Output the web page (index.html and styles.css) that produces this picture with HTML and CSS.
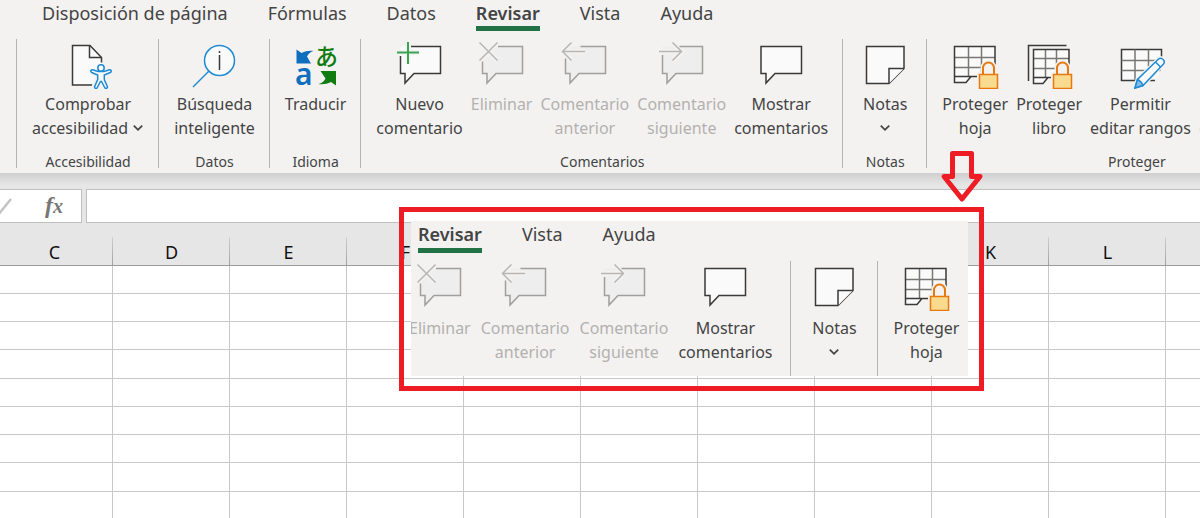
FILE: index.html
```html
<!DOCTYPE html>
<html lang="es">
<head>
    <meta charset="UTF-8">
    <meta name="viewport" content="width=device-width, initial-scale=1.0">
    <title>Proteger hoja</title>
    <link rel="stylesheet" href="styles.css">
</head>
<body>
    <!-- Shared icons -->
    <svg class="sprite" aria-hidden="true">
        <symbol id="delete-comment" viewBox="0 0 48 48">
            <path class="pale" d="M4.500 5.500h40v27h-26.500l-9 9.500v-9.500h-4.500z"/>
            <path class="bg-line" d="M1.500 1.500l18 18M19.500 1.500l-18 18"/>
            <path class="gray-line" d="M20 5.500h24.500v27H18L9 42v-9.500H4.500V20.500"/>
            <path class="light-line" d="M1.500 1.500l18 18M19.500 1.500l-18 18"/>
        </symbol>
        <symbol id="prev-comment" viewBox="0 0 48 48">
            <path class="pale" d="M4.500 5.500h40v27h-26.500l-9 9.500v-9.500h-4.500z"/>
            <path class="bg-line" d="M24 10.500H1.500M10.500 1.500l-9 9 9 9"/>
            <path class="gray-line" d="M19.500 5.500h25v27H18L9 42v-9.500H4.500V17.500"/>
            <path class="light-line" d="M24 10.500H1.500M10.500 1.500l-9 9 9 9"/>
        </symbol>
        <symbol id="next-comment" viewBox="0 0 48 48">
            <path class="pale" d="M4.500 5.500h40v27h-26.500l-9 9.500v-9.500h-4.500z"/>
            <path class="bg-line" d="M1 10.500h22.500M14.500 1.500l9 9-9 9"/>
            <path class="gray-line" d="M21.500 5.500h23v27H18L9 42v-9.500H4.500V14"/>
            <path class="light-line" d="M1 10.500h22.500M14.500 1.500l9 9-9 9"/>
        </symbol>
        <symbol id="show-comments" viewBox="0 0 48 48">
            <path class="dark-line white" d="M4 5.500h40.500v27H18L9 42v-9.500H4z"/>
        </symbol>
        <symbol id="note" viewBox="0 0 48 48">
            <path class="dark-line white" d="M5.500 5.500h37.500v22L28 42.500H5.500z"/>
            <path class="dark-line white" d="M43 27.500H28v15"/>
        </symbol>
        <symbol id="lock" viewBox="0 0 48 48">
            <path class="bg-lock" d="M32 33.500V27a5.500 5.500 0 0 1 11 0v6.500M28.500 33.500h18v14h-18z"/>
            <path class="shackle" d="M32 33.500V27a5.500 5.500 0 0 1 11 0v6.500"/>
            <path class="lock-body" d="M28.500 33.500h18v14h-18z"/>
        </symbol>
        <symbol id="protect-sheet" viewBox="0 0 48 48">
            <path class="white" d="M3.500 5.500h40.500v30H20l-5 6H3.500z"/>
            <path class="mid-line" d="M17.500 5.500v30M30.500 5.500v30M3.500 16.500H44M3.500 26.500H44"/>
            <path class="dark-line" d="M3.500 35.500H34M44 34V5.500H3.500v36H15l5-6"/>
            <use href="#lock"/>
        </symbol>
        <symbol id="chevron" viewBox="0 0 10 10">
            <path d="M1.500 3L5 6.500 8.500 3" fill="none" stroke="#444" stroke-width="1.500"/>
        </symbol>
    </svg>

    <header class="ribbon">
        <nav class="tabs">
            <button class="tab">Disposición de página</button>
            <button class="tab">Fórmulas</button>
            <button class="tab">Datos</button>
            <button class="tab active">Revisar</button>
            <button class="tab">Vista</button>
            <button class="tab">Ayuda</button>
        </nav>

        <div class="groups">
            <section class="group">
                <div class="tools">
                    <button class="tool">
                        <svg class="icon" viewBox="0 0 48 48">
                            <path class="white" d="M8.500 4.500h17l12 12V44h-29z"/>
                            <path class="dark-line" d="M28.500 44h-20V4.500h17.500l11.500 12v5"/>
                            <path class="dark-line" d="M25.500 4.500v12h12"/>
                            <path class="person-bg" d="M28 30.500l6 2.500v5l-3 8.500M46 30.500l-6 2.500v5l3 8.500M37 24v14"/>
                            <path class="person" d="M28.500 28.800c-1.800-.4-2.400 2-.8 2.700l6 2.500v4.500l-3 7c-.7 1.800 1.800 2.700 2.600 1l3.200-6h1l3.200 6c.8 1.700 3.300.8 2.600-1l-3-7V34l6-2.500c1.600-.7 1-3.100-.8-2.700L40 30.500h-6z"/>
                            <circle class="person" cx="37" cy="27" r="3.200"/>
                        </svg>
                        <span class="label">Comprobar<br>accesibilidad <svg class="chevron"><use href="#chevron"/></svg></span>
                    </button>
                </div>
                <h2 class="caption">Accesibilidad</h2>
            </section>

            <section class="group">
                <div class="tools">
                    <button class="tool">
                        <svg class="icon" viewBox="0 0 48 48">
                            <circle class="blue-line white" cx="28.500" cy="19.500" r="15"/>
                            <path class="blue-line" d="M18 30L2 46"/>
                            <path class="dark-line" d="M28.500 10v2M28.500 14v15"/>
                        </svg>
                        <span class="label">Búsqueda<br>inteligente</span>
                    </button>
                </div>
                <h2 class="caption">Datos</h2>
            </section>

            <section class="group">
                <div class="tools">
                    <button class="tool">
                        <svg class="icon" viewBox="0 0 48 48">
                            <path fill="#106ebe" d="M4.500 8.500l5 3.500c4-2 8-2.500 12-2-3 1-5 2.500-6.500 5.500l4 7H4.500z"/>
                            <path fill="#107c10" d="M44 44.500l-5-3.500c-4 2-8 2.500-12.500 2 3.500-1 5.500-2.500 7-5.500l-5-7.500H44z"/>
                            <text class="latin" x="3" y="44">a</text>
                            <text class="kana" x="23" y="24">あ</text>
                        </svg>
                        <span class="label">Traducir</span>
                    </button>
                </div>
                <h2 class="caption">Idioma</h2>
            </section>

            <section class="group">
                <div class="tools">
                    <button class="tool">
                        <svg class="icon" viewBox="0 0 48 48">
                            <path class="white" d="M4.500 5.500h40v27h-26.500l-9 9.500v-9.500h-4.500z"/>
                            <path class="bg-line" d="M12 1v22M1 11.500h22"/>
                            <path class="dark-line" d="M15 5.500h29.500v27H18L9 42v-9.500H4.500V15"/>
                            <path class="green-line" d="M12 1v22M1 11.500h22"/>
                        </svg>
                        <span class="label">Nuevo<br>comentario</span>
                    </button>
                    <button class="tool" disabled>
                        <svg class="icon"><use href="#delete-comment"/></svg>
                        <span class="label">Eliminar</span>
                    </button>
                    <button class="tool" disabled>
                        <svg class="icon"><use href="#prev-comment"/></svg>
                        <span class="label">Comentario<br>anterior</span>
                    </button>
                    <button class="tool" disabled>
                        <svg class="icon"><use href="#next-comment"/></svg>
                        <span class="label">Comentario<br>siguiente</span>
                    </button>
                    <button class="tool">
                        <svg class="icon"><use href="#show-comments"/></svg>
                        <span class="label">Mostrar<br>comentarios</span>
                    </button>
                </div>
                <h2 class="caption">Comentarios</h2>
            </section>

            <section class="group">
                <div class="tools">
                    <button class="tool">
                        <svg class="icon"><use href="#note"/></svg>
                        <span class="label">Notas<br><svg class="chevron"><use href="#chevron"/></svg></span>
                    </button>
                </div>
                <h2 class="caption">Notas</h2>
            </section>

            <section class="group protect">
                <div class="tools">
                    <button class="tool">
                        <svg class="icon"><use href="#protect-sheet"/></svg>
                        <span class="label">Proteger<br>hoja</span>
                    </button>
                    <button class="tool">
                        <svg class="icon" viewBox="0 0 48 48">
                            <path class="dark-line" d="M3.500 40V4.500h38"/>
                            <path class="white" d="M8.500 8.500H44v28H24l-5 6H8.500z"/>
                            <path class="mid-line" d="M20.500 8.500v28M31.500 8.500v28M8.500 17.500H44M8.500 27.500H44"/>
                            <path class="dark-line" d="M8.500 36.500H34M44 34V8.500H8.500v34H18l5-6"/>
                            <use href="#lock"/>
                        </svg>
                        <span class="label">Proteger<br>libro</span>
                    </button>
                    <button class="tool">
                        <svg class="icon" viewBox="0 0 48 48">
                            <path class="dark-line white" d="M4.500 8.500h40v31h-40z"/>
                            <path class="mid-line" d="M18 8.500v31M31.500 8.500v31M4.500 19.500h40M4.500 29.500h40"/>
                            <path class="pencil-bg" d="M18 47l2.500-8.500 21-20.500c3-2.500 7.500 2 5 5L26 44.500zM38 40h8V25"/>
                            <path class="blue-line white" d="M18 47l2.500-8.500 21-20.500c3-2.500 7.500 2 5 5L26 44.500z"/>
                            <path class="pencil-tip" d="M18 47l2.500-8.500c2 1 4.500 3 5.500 6z"/>
                            <path class="blue-line" d="M38.500 21l5 5"/>
                        </svg>
                        <span class="label">Permitir<br>editar rangos</span>
                    </button>
                    <button class="tool" disabled>
                        <span class="icon"></span>
                        <span class="label">Dejar de<br>compartir libro</span>
                    </button>
                </div>
                <h2 class="caption">Proteger</h2>
            </section>
        </div>
    </header>

    <div class="formula-bar">
        <div class="formula-actions">
            <button class="accept" aria-label="Introducir">
                <svg viewBox="0 0 18 18"><path d="M1 11l4 4.500L16 2" fill="none" stroke="#c4c4c4" stroke-width="2.500"/></svg>
            </button>
            <button class="fx" aria-label="Insertar función"><span class="f">f</span><span class="x">x</span></button>
        </div>
        <input class="formula" type="text" aria-label="Barra de fórmulas">
    </div>

    <div class="sheet">
        <table>
            <thead>
                <tr><th>C</th><th>D</th><th>E</th><th>F</th><th>G</th><th>H</th><th>I</th><th>J</th><th>K</th><th>L</th><th>M</th></tr>
            </thead>
            <tbody>
                <tr><td></td><td></td><td></td><td></td><td></td><td></td><td></td><td></td><td></td><td></td><td></td></tr>
                <tr><td></td><td></td><td></td><td></td><td></td><td></td><td></td><td></td><td></td><td></td><td></td></tr>
                <tr><td></td><td></td><td></td><td></td><td></td><td></td><td></td><td></td><td></td><td></td><td></td></tr>
                <tr><td></td><td></td><td></td><td></td><td></td><td></td><td></td><td></td><td></td><td></td><td></td></tr>
                <tr><td></td><td></td><td></td><td></td><td></td><td></td><td></td><td></td><td></td><td></td><td></td></tr>
                <tr><td></td><td></td><td></td><td></td><td></td><td></td><td></td><td></td><td></td><td></td><td></td></tr>
                <tr><td></td><td></td><td></td><td></td><td></td><td></td><td></td><td></td><td></td><td></td><td></td></tr>
                <tr><td></td><td></td><td></td><td></td><td></td><td></td><td></td><td></td><td></td><td></td><td></td></tr>
                <tr><td></td><td></td><td></td><td></td><td></td><td></td><td></td><td></td><td></td><td></td><td></td></tr>
            </tbody>
        </table>
    </div>

    <!-- Enlarged detail over the sheet -->
    <aside class="callout">
        <div class="panel">
            <nav class="tabs">
                <button class="tab active">Revisar</button>
                <button class="tab">Vista</button>
                <button class="tab">Ayuda</button>
            </nav>
            <div class="groups">
                <section class="group">
                    <div class="tools">
                        <button class="tool" disabled>
                            <svg class="icon"><use href="#delete-comment"/></svg>
                            <span class="label">Eliminar</span>
                        </button>
                        <button class="tool" disabled>
                            <svg class="icon"><use href="#prev-comment"/></svg>
                            <span class="label">Comentario<br>anterior</span>
                        </button>
                        <button class="tool" disabled>
                            <svg class="icon"><use href="#next-comment"/></svg>
                            <span class="label">Comentario<br>siguiente</span>
                        </button>
                        <button class="tool">
                            <svg class="icon"><use href="#show-comments"/></svg>
                            <span class="label">Mostrar<br>comentarios</span>
                        </button>
                    </div>
                </section>
                <section class="group">
                    <div class="tools">
                        <button class="tool">
                            <svg class="icon"><use href="#note"/></svg>
                            <span class="label">Notas<br><svg class="chevron"><use href="#chevron"/></svg></span>
                        </button>
                    </div>
                </section>
                <section class="group">
                    <div class="tools">
                        <button class="tool">
                            <svg class="icon"><use href="#protect-sheet"/></svg>
                            <span class="label">Proteger<br>hoja</span>
                        </button>
                    </div>
                </section>
            </div>
        </div>
    </aside>
    <svg class="arrow" viewBox="0 0 44 54" aria-hidden="true">
        <path d="M12.500 3.500h19v23H40L22 49 4 26.500h8.500z"/>
    </svg>
</body>
</html>
```
FILE: styles.css
```css
* {
    box-sizing: border-box;
}
body {
    position: relative;
    margin: 0;
    min-height: 100vh;
    overflow: hidden;
    background: #fff;
    color: #444;
    font-family: "Noto Sans", sans-serif;
    font-size: 16px;
}
button {
    padding: 0;
    border: none;
    background: none;
    color: inherit;
    font: inherit;
    cursor: pointer;
}
.sprite {
    display: none;
}

/* Ribbon */
.ribbon {
    padding-bottom: 5px;
    background: #f3f2f1;
    overflow: hidden;
}
.tabs {
    display: flex;
    gap: 40px;
    padding-left: 42px;
    margin-bottom: 8px;
}
.tab {
    height: 31px;
    border-bottom: 5px solid transparent;
    font-size: 18px;
    line-height: 26px;
    white-space: nowrap;
}
.tab.active {
    border-color: #217346;
    font-weight: 600;
}
.groups {
    display: flex;
    padding-left: 16px;
}
.group {
    display: flex;
    flex: none;
    flex-direction: column;
    justify-content: space-between;
    padding: 2px 14px 0 15px;
    border-left: 1px solid #b5b4b3;
}
.tools {
    display: flex;
    gap: 8px;
    justify-content: center;
}
.tool {
    display: flex;
    flex-direction: column;
    align-items: center;
    min-width: 54px;
}
.tool:disabled {
    color: #b3b1af;
    cursor: default;
}
.protect {
    padding-right: 32px;
}
.icon {
    display: block;
    width: 48px;
    height: 48px;
    margin-bottom: 3px;
}
.label {
    line-height: 24px;
    white-space: nowrap;
}
.chevron {
    width: 12px;
    height: 12px;
}
.caption {
    margin: 16px 0 0;
    font-size: 14px;
    font-weight: normal;
    line-height: 12px;
    text-align: center;
}
.protect .caption {
    padding-left: 20px;
}

/* Icon strokes */
.dark-line, .mid-line, .gray-line, .light-line, .blue-line, .green-line, .bg-line {
    fill: none;
    stroke-width: 1.5;
}
.dark-line { stroke: #3b3a39; }
.mid-line { stroke: #797775; }
.gray-line { stroke: #a19f9d; }
.light-line { stroke: #b8b6b4; }
.blue-line { stroke: #1e8bd4; }
.green-line { stroke: #3ba454; stroke-width: 2; }
.bg-line { stroke: #f3f2f1; stroke-width: 5; }
.white { fill: #fafafa; }
.pale { fill: #eeeeee; }
.bg-lock { fill: #f3f2f1; stroke: #f3f2f1; stroke-width: 5; }
.shackle { fill: none; stroke: #e8790f; stroke-width: 2; }
.lock-body { fill: #f8db8f; stroke: #e8790f; stroke-width: 1.5; }
.person { fill: #fafafa; stroke: #1e8bd4; stroke-width: 1.5; }
.person-bg { fill: none; stroke: #f3f2f1; stroke-width: 7; }
.pencil-bg { fill: #f3f2f1; stroke: #f3f2f1; stroke-width: 4; }
.pencil-tip { fill: #83beec; stroke: #1e8bd4; stroke-width: 1.5; }
.latin {
    fill: #106ebe;
    font: 600 30px "Noto Sans", sans-serif;
}
.kana {
    fill: #107c10;
    font: 500 23px "Noto Sans CJK JP", sans-serif;
}

/* Formula bar */
.formula-bar {
    display: flex;
    gap: 4px;
    height: 50px;
    padding-top: 16px;
    background: linear-gradient(#cfcfcf, #e6e6e6 12px);
}
.formula-actions {
    display: flex;
    align-items: center;
    width: 82px;
    border: 1px solid #bfbfbf;
    border-left: none;
    background: #fff;
}
.accept {
    width: 18px;
    height: 18px;
    margin-left: -5px;
}
.accept svg {
    display: block;
}
.fx {
    margin-left: 32px;
    color: #777;
    font-family: "Liberation Serif", serif;
    font-style: italic;
    font-weight: bold;
    line-height: 24px;
}
.f {
    font-size: 24px;
}
.x {
    font-size: 20px;
}
.formula {
    flex: 1;
    min-width: 0;
    border: 1px solid #bfbfbf;
    border-right: none;
    background: #fff;
}

/* Sheet */
.sheet {
    overflow: hidden;
}
table {
    width: 1283px;
    border-collapse: separate;
    border-spacing: 0;
    table-layout: fixed;
}
th {
    width: 117px;
    height: 43px;
    padding: 16px 0 0;
    border-bottom: 1px solid #9b9b9b;
    background: linear-gradient(#d0d0d0, #a0a0a0) right bottom / 1px 28px no-repeat #e6e6e6;
    color: #111;
    font-size: 18px;
    font-weight: normal;
    line-height: 24px;
}
th:first-child {
    width: 113px;
    padding-right: 4px;
}
td {
    height: 28px;
    padding: 0;
    border-right: 1px solid #c8c8c8;
    border-bottom: 1px solid #c8c8c8;
}
tr:nth-child(4n) td {
    height: 29px;
}

/* Callout */
.callout {
    position: absolute;
    top: 207px;
    left: 399px;
    padding: 9px 11px 10px 7px;
    border: 5px solid #ee1c25;
}
.panel {
    overflow: hidden;
    background: #f3f2f1;
}
.panel .tabs {
    padding-left: 7px;
    margin-bottom: 8px;
}
.panel .tab {
    height: 32px;
    line-height: 27px;
}
.panel .groups {
    padding-left: 0;
}
.panel .group {
    min-height: 115px;
    padding: 2px 16px 0;
}
.panel .group:first-child {
    padding-right: 18px;
    padding-left: 0;
    border-left: none;
    margin-left: -2px;
}
.panel .group:last-child {
    padding-right: 9px;
    padding-left: 15px;
}
.panel .tools {
    gap: 10px;
}
.panel .icon {
    margin-bottom: 5px;
}
.arrow {
    position: absolute;
    top: 150px;
    left: 940px;
    width: 44px;
    height: 54px;
}
.arrow path {
    fill: none;
    stroke: #ee1c25;
    stroke-width: 5;
    stroke-linejoin: round;
}
```
